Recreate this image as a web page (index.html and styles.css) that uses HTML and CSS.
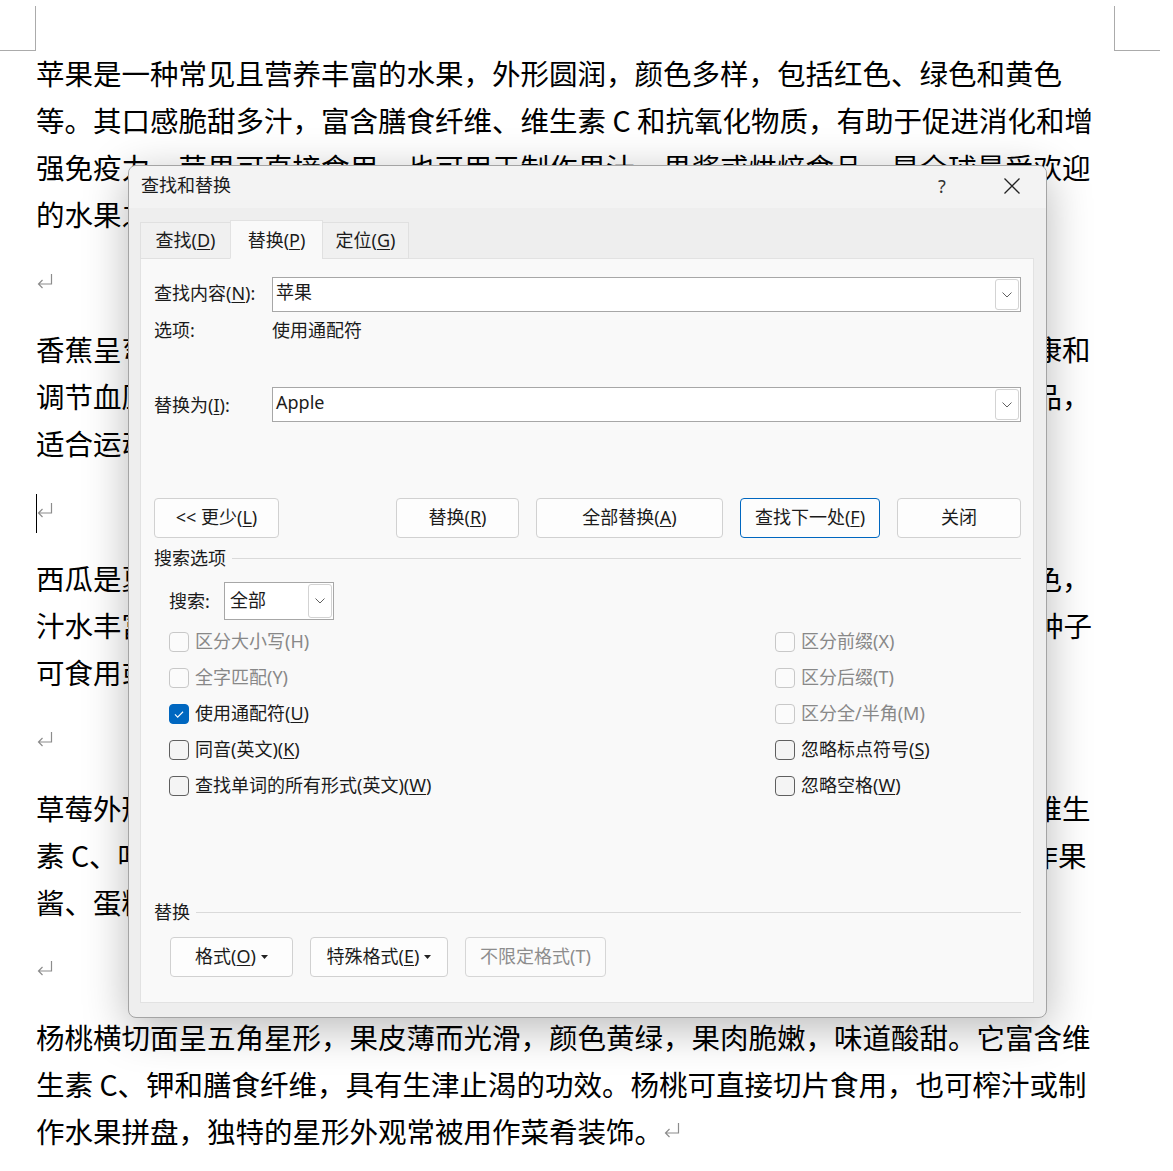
FILE: index.html
```html
<!DOCTYPE html>
<html lang="zh-CN">
<head>
    <meta charset="UTF-8">
    <title>查找和替换</title>
    <link rel="stylesheet" href="styles.css">
</head>
<body>
    <div class="marks">
        <span class="mark-l"></span>
        <span class="mark-r"></span>
    </div>
    <div class="doc">
        <p>苹果是一种常见且营养丰富的水果，外形圆润，颜色多样，包括红色、绿色和黄色<br>等。其口感脆甜多汁，富含膳食纤维、维生素 C 和抗氧化物质，有助于促进消化和增<br>强免疫力。苹果可直接食用，也可用于制作果汁、果酱或烘焙食品，是全球最受欢迎<br>的水果之一。<svg class="ret" viewBox="0 0 16 16"><path d="M14.5 1V11H1.5M5.5 7L1.5 11L5.5 15"/></svg></p>
        <p><svg class="ret" viewBox="0 0 16 16"><path d="M14.5 1V11H1.5M5.5 7L1.5 11L5.5 15"/></svg></p>
        <p>香蕉呈弯月形，成熟后果皮金黄，果肉软糯香甜，富含钾元素，有助于心血管健康和<br>调节血压，是很方便的能量来源。香蕉可直接食用，也常用于制作奶昔和烘焙食品，<br>适合运动后补充体力。香蕉还可搭配燕麦或酸奶食用。<svg class="ret" viewBox="0 0 16 16"><path d="M14.5 1V11H1.5M5.5 7L1.5 11L5.5 15"/></svg></p>
        <p><span class="caret"></span><svg class="ret" viewBox="0 0 16 16"><path d="M14.5 1V11H1.5M5.5 7L1.5 11L5.5 15"/></svg></p>
        <p>西瓜是夏季最受欢迎的消暑水果，果肉多为红色，也有黄色品种，外皮多为深绿色，<br>汁水丰富，含水量高，富含维生素 A 和番茄红素，清凉解渴。果肉中散布着黑色种子<br>可食用或烘烤成零食。西瓜也可榨汁或制作沙拉。<svg class="ret" viewBox="0 0 16 16"><path d="M14.5 1V11H1.5M5.5 7L1.5 11L5.5 15"/></svg></p>
        <p><svg class="ret" viewBox="0 0 16 16"><path d="M14.5 1V11H1.5M5.5 7L1.5 11L5.5 15"/></svg></p>
        <p>草莓外形呈心形，表面布满细小的种子，果肉柔软多汁，酸甜可口。草莓中富含维生<br>素 C、叶酸和花青素等成分，具有抗氧化作用。草莓可直接食用，也常被用于制作果<br>酱、蛋糕和冰淇淋等甜品。<svg class="ret" viewBox="0 0 16 16"><path d="M14.5 1V11H1.5M5.5 7L1.5 11L5.5 15"/></svg></p>
        <p><svg class="ret" viewBox="0 0 16 16"><path d="M14.5 1V11H1.5M5.5 7L1.5 11L5.5 15"/></svg></p>
        <p>杨桃横切面呈五角星形，果皮薄而光滑，颜色黄绿，果肉脆嫩，味道酸甜。它富含维<br>生素 C、钾和膳食纤维，具有生津止渴的功效。杨桃可直接切片食用，也可榨汁或制<br>作水果拼盘，独特的星形外观常被用作菜肴装饰。<svg class="ret" viewBox="0 0 16 16"><path d="M14.5 1V11H1.5M5.5 7L1.5 11L5.5 15"/></svg></p>
    </div>

    <div class="dlg">
        <div class="titlebar">
            <span class="title">查找和替换</span>
            <span class="help">?</span>
            <span class="close"><svg viewBox="0 0 16 16"><path d="M0.5 0.5L15.5 15.5M15.5 0.5L0.5 15.5"/></svg></span>
        </div>
        <div class="tabs">
            <div class="tab t-find"><span>查找(<u>D</u>)</span></div>
            <div class="tab t-repl active"><span>替换(<u>P</u>)</span></div>
            <div class="tab t-goto"><span>定位(<u>G</u>)</span></div>
        </div>
        <div class="panel">
            <div class="field find">
                <label>查找内容(<u>N</u>):</label>
                <div class="combo"><span class="val">苹果</span><span class="drop"><svg viewBox="0 0 10 6"><path d="M0.5 0.5L5 5L9.5 0.5"/></svg></span></div>
            </div>
            <div class="field opts">
                <label>选项:</label>
                <span>使用通配符</span>
            </div>
            <div class="field repl">
                <label>替换为(<u>I</u>):</label>
                <div class="combo"><span class="val">Apple</span><span class="drop"><svg viewBox="0 0 10 6"><path d="M0.5 0.5L5 5L9.5 0.5"/></svg></span></div>
            </div>
            <div class="actions">
                <button class="btn b-less"><span>&lt;&lt; 更少(<u>L</u>)</span></button>
                <button class="btn b-repl"><span>替换(<u>R</u>)</span></button>
                <button class="btn b-all"><span>全部替换(<u>A</u>)</span></button>
                <button class="btn b-next default"><span>查找下一处(<u>F</u>)</span></button>
                <button class="btn b-close"><span>关闭</span></button>
            </div>
            <div class="group-head"><span>搜索选项</span><i></i></div>
            <div class="search-row">
                <label>搜索:</label>
                <div class="select"><span class="val">全部</span><span class="drop"><svg viewBox="0 0 10 6"><path d="M0.5 0.5L5 5L9.5 0.5"/></svg></span></div>
            </div>
            <div class="checks">
                <div class="chk off"><span class="box"></span><span>区分大小写(H)</span></div>
                <div class="chk off"><span class="box"></span><span>区分前缀(X)</span></div>
                <div class="chk off"><span class="box"></span><span>全字匹配(Y)</span></div>
                <div class="chk off"><span class="box"></span><span>区分后缀(T)</span></div>
                <div class="chk on"><span class="box"><svg viewBox="0 0 20 20"><path d="M5.5 10.5L8.5 13.5L14.5 7.5"/></svg></span><span>使用通配符(<u>U</u>)</span></div>
                <div class="chk off"><span class="box"></span><span>区分全/半角(M)</span></div>
                <div class="chk"><span class="box"></span><span>同音(英文)(<u>K</u>)</span></div>
                <div class="chk"><span class="box"></span><span>忽略标点符号(<u>S</u>)</span></div>
                <div class="chk"><span class="box"></span><span>查找单词的所有形式(英文)(<u>W</u>)</span></div>
                <div class="chk"><span class="box"></span><span>忽略空格(<u>W</u>)</span></div>
            </div>
            <div class="group-head"><span>替换</span><i></i></div>
            <div class="fmt-row">
                <button class="btn b-fmt"><span>格式(<u>O</u>)</span><svg class="tri" viewBox="0 0 7 4"><path d="M0 0H7L3.5 4Z"/></svg></button>
                <button class="btn b-special"><span>特殊格式(<u>E</u>)</span><svg class="tri" viewBox="0 0 7 4"><path d="M0 0H7L3.5 4Z"/></svg></button>
                <button class="btn b-nofmt" disabled><span>不限定格式(T)</span></button>
            </div>
        </div>
    </div>
</body>
</html>
```

FILE: styles.css
```css
body {
    margin: 0;
    background: #fff;
    font-family: "Noto Sans CJK SC", sans-serif;
    overflow: hidden;
    position: relative;
    height: 1171px;
}

/* page corner marks */
.marks {
    display: flex;
    width: 1160px;
    height: 51px;
}
.mark-l {
    width: 35px;
    height: 44px;
    margin-top: 6px;
    border-right: 1px solid #ababab;
    border-bottom: 1px solid #ababab;
}
.mark-r {
    width: 45px;
    height: 44px;
    margin-top: 6px;
    margin-left: auto;
    border-left: 1px solid #ababab;
    border-bottom: 1px solid #ababab;
}

/* document text */
.doc {
    padding-left: 36px;
    margin-top: -2px;
}
.doc p {
    margin: 0 0 20.6px;
    font-size: 28.5px;
    line-height: 47px;
    white-space: nowrap;
    color: #000;
}
.ret {
    width: 16px;
    height: 16px;
    vertical-align: 5px;
    margin-left: 1px;
}
.ret path {
    fill: none;
    stroke: #8c8c8c;
    stroke-width: 1.2;
}
.caret {
    display: inline-block;
    width: 1px;
    height: 39px;
    margin-right: -1px;
    background: #000;
    vertical-align: -10px;
}

/* dialog */
.dlg {
    position: absolute;
    left: 128px;
    top: 165px;
    width: 919px;
    box-sizing: border-box;
    border: 1px solid #a4a4a4;
    border-radius: 8px;
    background: #eeeeee;
    box-shadow: 0 10px 45px rgba(0, 0, 0, 0.28);
    font-family: "Noto Sans", "Noto Sans CJK SC", sans-serif;
    font-size: 18px;
    line-height: 24px;
    color: #1b1b1b;
    overflow: hidden;
}
u {
    text-decoration: underline;
    text-decoration-thickness: 1px;
    text-underline-offset: 2px;
}
.titlebar {
    height: 42px;
    background: #f3f3f3;
    display: flex;
    align-items: center;
    padding-left: 12px;
}
.title {
    padding-bottom: 5px;
}
.help {
    margin-left: auto;
    margin-right: 24px;
    width: 46px;
    text-align: center;
    color: #333;
    font-size: 18px;
    padding-bottom: 3px;
}
.close {
    width: 46px;
    margin-right: 11px;
    display: flex;
    justify-content: center;
    padding-bottom: 3px;
}
.close svg {
    width: 16px;
    height: 16px;
}
.close path {
    stroke: #222;
    stroke-width: 1.3;
}

.tabs {
    height: 51px;
    margin-bottom: -1px;
    display: flex;
    align-items: flex-end;
    padding-left: 11px;
    position: relative;
    z-index: 1;
}
.tab {
    box-sizing: border-box;
    height: 37px;
    display: flex;
    align-items: center;
    justify-content: center;
    background: #f0f0f0;
    border: 1px solid #e0e0e0;
    margin-right: -1px;
    padding-bottom: 2px;
}
.t-find { width: 91px; }
.t-repl { width: 93px; }
.t-goto { width: 87px; }
.tab.active {
    height: 39px;
    background: #f9f9f9;
    border-color: #e2e2e2;
    border-bottom-color: #f9f9f9;
    padding-bottom: 0;
}

.panel {
    margin: 0 12px 14px 11px;
    background: #f9f9f9;
    border: 1px solid #e2e2e2;
    padding: 0 12px 25px 13px;
}
.field {
    display: flex;
    align-items: center;
}
.field label {
    width: 118px;
    flex-shrink: 0;
}
.find {
    margin-top: 18px;
    height: 35px;
}
.find label {
    padding-bottom: 3px;
}
.opts {
    margin-top: 6px;
    height: 24px;
}
.repl {
    margin-top: 45px;
    height: 35px;
}
.combo {
    flex: 1;
    box-sizing: border-box;
    height: 35px;
    border: 1px solid #a7a7a7;
    background: #fff;
    display: flex;
    align-items: flex-start;
    padding-left: 3px;
}
.combo .val {
    line-height: 28px;
}
.drop {
    margin-left: auto;
    margin-right: 1px;
    margin-top: 1px;
    box-sizing: border-box;
    width: 24px;
    height: 31px;
    border: 1px solid #d3d3d3;
    border-radius: 3px;
    display: flex;
    align-items: center;
    justify-content: center;
}
.drop svg {
    width: 10px;
    height: 6px;
}
.drop path {
    fill: none;
    stroke: #606060;
    stroke-width: 1;
}

.btn {
    box-sizing: border-box;
    height: 40px;
    border: 1px solid #d1d1d1;
    border-radius: 4px;
    background: #fdfdfd;
    font-family: inherit;
    font-size: 18px;
    line-height: 24px;
    color: #1b1b1b;
    padding: 0 0 2px;
    display: flex;
    align-items: center;
    justify-content: center;
}
.btn.default {
    border-color: #0067c0;
}
.btn:disabled {
    color: #8d8d8d;
    background: #fbfbfb;
    border-color: #d6d6d6;
}
.actions {
    margin-top: 76px;
    display: flex;
    gap: 17px;
}
.b-less { width: 125px; }
.b-repl { width: 123px; margin-left: auto; }
.b-all { width: 187px; }
.b-next { width: 140px; }
.b-close { width: 124px; }

.group-head {
    display: flex;
    align-items: center;
    height: 24px;
    margin-top: 8px;
}
.group-head i {
    flex: 1;
    height: 1px;
    background: #dadada;
    margin-left: 6px;
}

.search-row {
    margin-top: 12px;
    padding-left: 15px;
    display: flex;
    align-items: center;
}
.search-row label {
    width: 55px;
}
.select {
    box-sizing: border-box;
    width: 110px;
    height: 38px;
    border: 1px solid #a7a7a7;
    background: #fff;
    display: flex;
    align-items: center;
    padding-left: 5px;
}
.select .val {
    padding-bottom: 3px;
}
.select .drop {
    margin-top: 0;
    height: 34px;
}

.checks {
    margin-top: 4px;
    padding-left: 15px;
    display: grid;
    grid-template-columns: 606px 1fr;
    grid-auto-rows: 36px;
}
.chk {
    display: flex;
    align-items: center;
    gap: 6px;
    padding-bottom: 2px;
}
.box {
    box-sizing: border-box;
    width: 20px;
    height: 20px;
    border: 1px solid #5f5f5f;
    border-radius: 4px;
    background: #f4f4f4;
    margin-top: 2px;
}
.chk.off {
    color: #888;
}
.chk.off .box {
    border-color: #c8c8c8;
    background: #fbfbfb;
}
.chk.on .box {
    border-color: #0067c0;
    background: #0067c0;
}
.box svg {
    display: block;
    width: 18px;
    height: 18px;
}
.box path {
    fill: none;
    stroke: #fff;
    stroke-width: 1.2;
}

.checks + .group-head {
    margin-top: 96px;
}
.fmt-row {
    margin-top: 13px;
    padding-left: 16px;
    display: flex;
    gap: 17px;
}
.b-fmt { width: 123px; }
.b-special { width: 138px; }
.b-nofmt { width: 141px; }
.tri {
    width: 7px;
    height: 4px;
    margin-left: 5px;
    margin-top: 2px;
}
.tri path {
    fill: #222;
}
```
